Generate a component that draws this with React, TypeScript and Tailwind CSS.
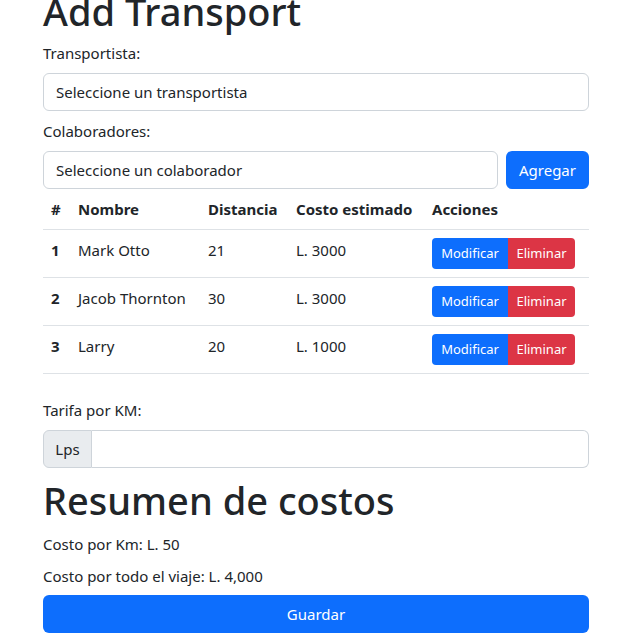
import React from 'react';

const rows = [
  { id: 1, nombre: 'Mark Otto', distancia: 21, costo: 'L. 3000' },
  { id: 2, nombre: 'Jacob Thornton', distancia: 30, costo: 'L. 3000' },
  { id: 3, nombre: 'Larry', distancia: 20, costo: 'L. 1000' },
];

export default function App() {
  return (
    <div className="min-h-[644px] bg-white text-[#212529] text-[15px] leading-6 overflow-hidden" style={{ fontFamily: '"Noto Sans", "Liberation Sans", sans-serif' }}>
      <div className="ml-[43px] w-[546px]">
        <h1 className="-mt-[13px] mb-[6px] text-[38px] leading-[48px] font-medium">Add Transport</h1>

        <label className="block mb-2">Transportista:</label>
        <div className="h-[38px] border border-[#ced4da] rounded-md px-3 flex items-center mb-2">
          Seleccione un transportista
        </div>

        <label className="block mb-2">Colaboradores:</label>
        <div className="flex gap-2">
          <div className="flex-1 h-[38px] border border-[#ced4da] rounded-md px-3 flex items-center">
            Seleccione un colaborador
          </div>
          <button className="h-[38px] w-[83px] bg-[#0d6efd] text-white rounded-md">Agregar</button>
        </div>

        {/* tabla de colaboradores */}
        <table className="w-full table-fixed border-collapse">
          <thead>
            <tr className="border-b border-[#dee2e6]">
              <th className="w-[27px] p-2 text-left font-bold align-top">#</th>
              <th className="w-[130px] p-2 text-left font-bold align-top">Nombre</th>
              <th className="w-[88px] p-2 text-left font-bold align-top">Distancia</th>
              <th className="w-[136px] p-2 text-left font-bold align-top whitespace-nowrap">Costo estimado</th>
              <th className="w-[165px] p-2 text-left font-bold align-top">Acciones</th>
            </tr>
          </thead>
          <tbody>
            {rows.map((r) => (
              <tr key={r.id} className="border-b border-[#dee2e6]">
                <td className="p-2 font-bold align-top">{r.id}</td>
                <td className="p-2 align-top whitespace-nowrap">{r.nombre}</td>
                <td className="p-2 align-top">{r.distancia}</td>
                <td className="p-2 align-top">{r.costo}</td>
                <td className="p-2 align-top">
                  <div className="flex text-[13px] leading-[21px]">
                    <button className="h-[31px] w-[76px] bg-[#0d6efd] text-white rounded-l">Modificar</button>
                    <button className="h-[31px] w-[67px] bg-[#dc3545] text-white rounded-r">Eliminar</button>
                  </div>
                </td>
              </tr>
            ))}
          </tbody>
        </table>

        <label className="block mt-6 mb-2">Tarifa por KM:</label>
        <div className="flex h-[38px]">
          <span className="w-[49px] flex items-center justify-center bg-[#e9ecef] border border-[#ced4da] rounded-l-md">Lps</span>
          <div className="flex-1 border border-l-0 border-[#ced4da] rounded-r-md"></div>
        </div>

        <h1 className="mt-2 mb-2 text-[38px] leading-[48px] font-medium">Resumen de costos</h1>
        <p className="mb-2">Costo por Km: L. 50</p>
        <p className="mb-[7px]">Costo por todo el viaje: L. 4,000</p>
        <button className="w-full h-[38px] bg-[#0d6efd] text-white rounded-md">Guardar</button>
      </div>
    </div>
  );
}
